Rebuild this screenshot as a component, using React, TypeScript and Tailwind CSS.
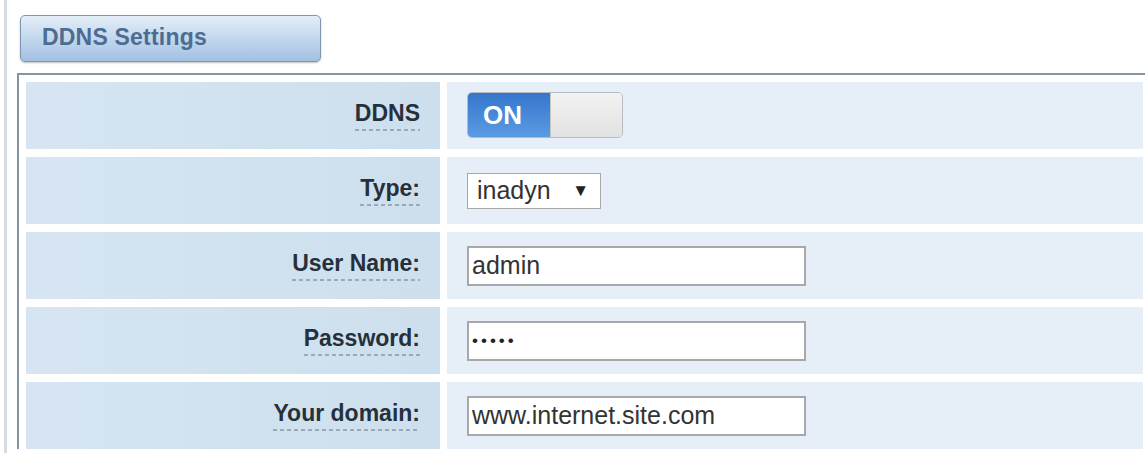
import React from "react";

const rows = [
  { label: "Type:", kind: "select", value: "inadyn" },
  { label: "User Name:", kind: "text", value: "admin" },
  { label: "Password:", kind: "password", value: "admin" },
  { label: "Your domain:", kind: "text", value: "www.internet.site.com" },
];

function Label({ text }: { text: string }) {
  return (
    <div className="w-[414px] shrink-0 bg-gradient-to-r from-[#d6e5f1] to-[#cddfed] flex items-center justify-end pr-[20px]">
      <span className="font-bold text-[23px] leading-[26px] text-[#26303b] pb-[5px] bg-[repeating-linear-gradient(90deg,#9aa9ba_0_4px,transparent_4px_7px)] bg-[length:100%_2px] bg-bottom bg-no-repeat">
        {text}
      </span>
    </div>
  );
}

export default function App() {
  return (
    <div className="w-[1148px] h-[453px] bg-white overflow-hidden font-['Liberation_Sans',Arial,sans-serif]">
      <div className="ml-[4px] h-full border-l-[3px] border-[#d3dbe3] pl-[10px] pt-[15px]">
        {/* Tab */}
        <div className="ml-[3px] w-[301px] h-[47px] rounded-[5px] border border-[#7f96ae] bg-gradient-to-b from-[#e4eef8] to-[#a2c1e2] shadow-[0_1px_2px_rgba(0,0,0,0.25)] flex items-center pl-[21px] pb-[3px]">
          <span className="font-bold text-[23px] tracking-[0.2px] text-[#4d6c92]">DDNS Settings</span>
        </div>

        {/* Table */}
        <div className="mt-[11px] w-[1128px] border-t-2 border-l-2 border-[#8494a3] pt-[7px] pl-[7px] pr-[2px] flex flex-col gap-[8px]">
          {/* DDNS toggle */}
          <div className="flex h-[67px] gap-[7px]">
            <Label text="DDNS" />
            <div className="flex-1 bg-[#e6eef8] flex items-center pl-[20px] pb-[1px]">
              <div className="flex w-[156px] h-[46px] rounded-[5px] overflow-hidden border border-[#b5bcc4]">
                <div className="w-[82px] bg-gradient-to-b from-[#3576cc] to-[#5b9be3] flex items-center pl-[15px]">
                  <span className="font-bold text-[26px] text-white">ON</span>
                </div>
                <div className="flex-1 bg-gradient-to-b from-[#f2f2f2] to-[#e2e2e2] border-l border-[#c4c4c4]" />
              </div>
            </div>
          </div>

          {rows.map((r) => (
            <div key={r.label} className="flex h-[67px] gap-[7px]">
              <Label text={r.label} />
              <div className="flex-1 bg-[#e6eef8] flex items-center pl-[20px]">
                {r.kind === "select" ? (
                  <div className="w-[134px] h-[36px] bg-white border border-[#a9a9a9] flex items-center justify-between pl-[9px] pr-[11px]">
                    <span className="text-[25px] text-[#333]">{r.value}</span>
                    <span className="text-[17px] text-[#222]">▼</span>
                  </div>
                ) : r.kind === "password" ? (
                  <input
                    readOnly
                    type="password"
                    value={r.value}
                    className="w-[339px] h-[40px] bg-white border-2 border-[#a8a8a8] pl-[3px] text-[17px] tracking-[3px] text-[#222] outline-none"
                  />
                ) : (
                  <input
                    readOnly
                    type="text"
                    value={r.value}
                    className="w-[339px] h-[40px] bg-white border-2 border-[#a8a8a8] pl-[3px] text-[25px] text-[#333] outline-none"
                  />
                )}
              </div>
            </div>
          ))}
        </div>
      </div>
    </div>
  );
}
